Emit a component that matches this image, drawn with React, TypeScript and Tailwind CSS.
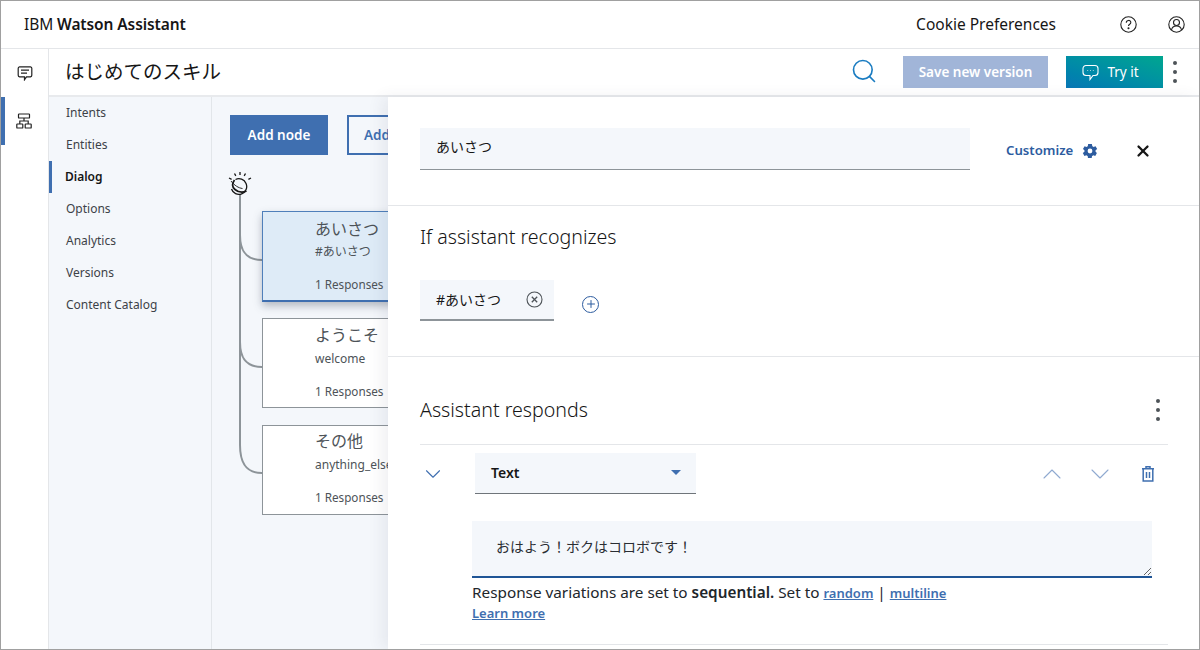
import React from "react";
import { ChevronDown, ChevronUp, Plus, X, Search } from "lucide-react";

const FONT = "[font-family:'Noto_Sans','Noto_Sans_CJK_JP',sans-serif]";

function Kebab() {
  return (
    <div className="flex flex-col items-center gap-[5px]">
      <span className="w-[4px] h-[4px] rounded-full bg-[#4d5358]" />
      <span className="w-[4px] h-[4px] rounded-full bg-[#4d5358]" />
      <span className="w-[4px] h-[4px] rounded-full bg-[#4d5358]" />
    </div>
  );
}

function WatsonLogo() {
  return (
    <svg width="26" height="24" viewBox="0 0 26 24" fill="none" stroke="#161616" strokeWidth="1.2">
      <path d="M8.500 8.500a7.800 7.800 0 1 1-4 9.500" strokeWidth="1.300" />
      <path d="M7.500 9c-2.500 3.500-2.500 7 .5 9.500 3 2.500 7.500 3.500 11.500 1.500" strokeWidth="1.700" />
      <path d="M4 10c3.500 4.500 7.500 7 11.500 7.500" strokeWidth="0.900" />
      <path d="M13 1v3M7.500 2.500l1.300 2.400M18.500 2.500l-1.300 2.400M2 7l2.600 1.300M24 7l-2.600 1.300" strokeWidth="1.300" />
    </svg>
  );
}

function TreeNode({ title, sub, box, subGap }: { title: string; sub: string; box: string; subGap: string }) {
  return (
    <div className={`w-[160px] pl-[52px] flex flex-col whitespace-nowrap text-[#4d5358] border ${box}`}>
      <div className="text-[16px] leading-[24px]">{title}</div>
      <div className={`text-[12px] leading-[18px] ${subGap}`}>{sub}</div>
      <div className="text-[11.700px] leading-[18px] mt-[14px]">1 Responses</div>
    </div>
  );
}

export default function App() {
  return (
    <div className={`${FONT} w-[1200px] h-[650px] border border-[#a0a0a0] flex flex-col overflow-hidden bg-white text-[#161616]`}>
      <header className="h-[48px] shrink-0 flex items-center pl-[23px] border-b border-[#e4e6e9]">
        <div className="text-[15.500px] tracking-[-0.1px]">
          IBM <span className="font-semibold">Watson Assistant</span>
        </div>
        <div className="ml-auto text-[15.500px] mr-[64px]">Cookie Preferences</div>
        <svg className="mr-[31px]" width="17" height="17" viewBox="0 0 17 17" fill="none" stroke="#222" strokeWidth="1.1">
          <circle cx="8.500" cy="8.500" r="7.700" />
          <path d="M6.300 6.700c0-3 4.500-3 4.500-.2 0 1.800-2.300 1.800-2.300 3.600" />
          <circle cx="8.500" cy="12.300" r=".5" fill="#222" />
        </svg>
        <svg className="mr-[14px]" width="17" height="17" viewBox="0 0 17 17" fill="none" stroke="#222" strokeWidth="1.1">
          <circle cx="8.500" cy="8.500" r="7.700" />
          <circle cx="8.500" cy="6.500" r="3" />
          <path d="M3.500 14c.5-3 2.500-4 5-4s4.500 1 5 4" />
        </svg>
      </header>

      <div className="flex-1 flex min-h-0">
        <nav className="w-[48px] shrink-0 border-r border-[#e4e6e9] flex flex-col">
          <div className="h-[48px] flex items-center justify-center">
            <svg width="16" height="16" viewBox="0 0 16 16" fill="none" stroke="#222" strokeWidth="1.2">
              <path d="M2.500 1.800h11a1.500 1.500 0 0 1 1.300 1.500v7a1.500 1.500 0 0 1-1.300 1.500H9.500L7.500 14.700v-2.900h-5a1.500 1.500 0 0 1-1.300-1.500v-7a1.500 1.500 0 0 1 1.300-1.500z" />
              <path d="M4 5.200h8M4 8.200h6" />
            </svg>
          </div>
          <div className="h-[48px] flex items-center justify-center border-l-[4px] border-[#3f6fb0] pr-[6px]">
            <svg width="16" height="16" viewBox="0 0 16 16" fill="none" stroke="#222" strokeWidth="1.2">
              <rect x="2.500" y="1" width="11" height="4" rx=".6" />
              <rect x=".8" y="11" width="6" height="4" rx=".6" />
              <rect x="9.200" y="11" width="6" height="4" rx=".6" />
              <path d="M3.800 11V8h8.400v3M8 5v3" />
            </svg>
          </div>
        </nav>

        <div className="flex-1 flex flex-col min-w-0">
          <div className="h-[48px] shrink-0 flex items-center border-b-2 border-[#e8eaed] pl-[16px]">
            <h1 className="text-[19.500px] font-normal">はじめてのスキル</h1>
            <Search className="ml-auto mr-[25px] mb-[2px] text-[#1a7cc1]" size={28} strokeWidth={1.4} />
            <button className="w-[145px] h-[32px] bg-[#a1b5d8] text-white text-[13.500px] font-semibold mr-[18px]">Save new version</button>
            <button className="w-[97px] h-[32px] bg-gradient-to-tr from-[#0a76b5] to-[#00a68f] text-white text-[13.500px] flex items-center justify-center gap-[8px] pr-[8px]">
              <svg width="17" height="17" viewBox="0 0 17 17" fill="none" stroke="#fff" strokeWidth="1.1">
                <path d="M4 1.500h9a3 3 0 0 1 3 3v4a3 3 0 0 1-3 3h-2l-3 4v-4H4a3 3 0 0 1-3-3v-4a3 3 0 0 1 3-3z" />
                <path d="M5.500 6.500h.6M8.200 6.500h.6M10.900 6.500h.6" />
              </svg>
              Try it
            </button>
            <div className="ml-[10px] mr-[22px]"><Kebab /></div>
          </div>

          <div className="flex-1 flex min-h-0">
            <aside className="w-[163px] shrink-0 bg-[#f4f7fb] border-r border-[#e2e6ea] text-[12px] text-[#3d4248]">
              {["Intents", "Entities", "Dialog", "Options", "Analytics", "Versions", "Content Catalog"].map((t) => (
                <div
                  key={t}
                  className={`h-[32px] flex items-center ${
                    t === "Dialog" ? "border-l-[3px] border-[#3f6fb0] pl-[13px] font-semibold text-[#161616]" : "pl-[17px]"
                  }`}
                >
                  {t}
                </div>
              ))}
            </aside>

            <main className="flex-1 min-w-0 bg-[#f4f7fb] overflow-hidden pl-[18px] pt-[18px] relative">
              <div className="flex gap-[19px] whitespace-nowrap">
                <button className="w-[98px] h-[40px] shrink-0 bg-[#3f6fb0] text-white text-[13.500px] font-semibold">Add node</button>
                <button className="w-[98px] h-[40px] shrink-0 border-2 border-[#3f6fb0] text-[#3f6fb0] text-[13.500px] font-semibold text-left pl-[15px]">Add child node</button>
              </div>
              <div className="ml-[-3px] mt-[16px] h-[24px]"><WatsonLogo /></div>
              <svg className="absolute left-[18px] top-[98px]" width="40" height="290" viewBox="0 0 40 290" fill="none" stroke="#8d9499" strokeWidth="2">
                <path d="M10 0V250c0 18 6 28 22 28" />
                <path d="M10 40c0 16 6 25 22 25" />
                <path d="M10 147c0 16 6 25 22 25" />
              </svg>
              <div className="relative pl-[32px] pt-[16px] flex flex-col">
                <TreeNode
                  title="あいさつ"
                  sub="#あいさつ"
                  subGap="mt-[2px]"
                  box="h-[91px] pt-[5px] bg-[#deebf7] border-[#4f7fba] border-b-2 border-b-[#3f6fb0] shadow-[0_4px_8px_rgba(60,70,90,0.35)]"
                />
                <div className="h-[16px]" />
                <TreeNode title="ようこそ" sub="welcome" subGap="mt-[3px]" box="h-[90px] pt-[4px] bg-white border-[#8d9499] border-r-0" />
                <div className="h-[17px]" />
                <TreeNode title="その他" sub="anything_else" subGap="mt-[3px]" box="h-[90px] pt-[3px] bg-white border-[#8d9499] border-r-0" />
              </div>
            </main>

            <section className="w-[811px] shrink-0 bg-white flex flex-col shadow-[-6px_0_14px_rgba(60,70,90,0.08)] relative">
              <div className="h-[109px] shrink-0 border-b border-[#e4e6e9] flex items-center pl-[32px] pb-[4px]">
                <div className="w-[550px] h-[42px] bg-[#f4f7fb] border-b border-[#8d9499] flex items-center pl-[16px] pb-[5px] text-[14px]">あいさつ</div>
                <div className="ml-[36px] mt-[4px] text-[13.200px] font-semibold text-[#2d5c9f]">Customize</div>
                <svg className="ml-[8px] mt-[4px]" width="18" height="18" viewBox="0 0 24 24" fill="#2d5c9f">
                  <path fillRule="evenodd" d="M19.400 13a7.500 7.500 0 0 0 0-2l2.200-1.700-2.200-3.800-2.600 1a7.500 7.500 0 0 0-1.700-1L14.500 2.800h-5l-.4 2.700a7.500 7.500 0 0 0-1.700 1l-2.600-1-2.200 3.800L4.600 11a7.500 7.500 0 0 0 0 2l-2.200 1.700 2.200 3.800 2.600-1a7.500 7.500 0 0 0 1.700 1l.4 2.700h5l.4-2.700a7.500 7.500 0 0 0 1.700-1l2.600 1 2.200-3.800zM12 15.200a3.200 3.200 0 1 1 0-6.400 3.200 3.200 0 0 1 0 6.400z" />
                </svg>
                <X className="ml-[35px] mt-[4px]" size={18} strokeWidth={3} />
              </div>

              <div className="h-[151px] shrink-0 border-b border-[#e4e6e9] pl-[32px] pt-[18px]">
                <h2 className="text-[19.600px] leading-[26px] font-light">If assistant recognizes</h2>
                <div className="flex items-center mt-[30px]">
                  <div className="w-[134px] h-[41px] bg-[#f4f7fb] border-b-2 border-[#8d9499] flex items-center pl-[16px] text-[14px] whitespace-nowrap">
                    #あいさつ
                    <svg className="ml-auto mr-[11px]" width="17" height="17" viewBox="0 0 17 17" fill="none" stroke="#4d5358" strokeWidth="1.100">
                      <circle cx="8.500" cy="8.500" r="7.500" />
                      <path d="M5.800 5.800l5.400 5.400M11.200 5.800l-5.400 5.400" strokeWidth="1.300" />
                    </svg>
                  </div>
                  <div className="ml-[28px] mt-[7px] w-[17px] h-[17px] rounded-full border-[1.500px] border-[#2d5c9f] flex items-center justify-center text-[#2d5c9f]">
                    <Plus size={12} strokeWidth={2} />
                  </div>
                </div>
              </div>

              <div className="flex-1 pl-[32px] pr-[31px] flex flex-col min-h-0">
                <div className="h-[88px] shrink-0 border-b border-[#e4e6e9] flex items-center justify-between pt-[18px] pr-[8px]">
                  <h2 className="text-[19.600px] font-light">Assistant responds</h2>
                  <Kebab />
                </div>
                <div className="flex items-center mt-[8px] h-[41px]">
                  <ChevronDown className="text-[#3f6fb0]" size={26} strokeWidth={1} />
                  <div className="ml-[29px] w-[221px] h-[41px] bg-[#f4f7fb] border-b border-[#6f757a] flex items-center pl-[16px] pr-[15px] pb-[2px] text-[14px] font-semibold">
                    Text
                    <span className="ml-auto w-0 h-0 border-x-[5px] border-x-transparent border-t-[5px] border-t-[#3f6fb0]" />
                  </div>
                  <ChevronUp className="ml-auto text-[#8fa9d0]" size={32} strokeWidth={0.8} />
                  <ChevronDown className="ml-[16px] text-[#8fa9d0]" size={32} strokeWidth={0.8} />
                  <svg className="ml-[26px] mr-[14px]" width="12" height="16" viewBox="0 0 12 16" fill="none" stroke="#3f6fb0" strokeWidth="1.500">
                    <path d="M0 2.700h12M4 2.700V.8h4v1.900" />
                    <path d="M1.200 3v12h9.600V3M4.500 6v6M7.500 6v6" />
                  </svg>
                </div>
                <textarea
                  readOnly
                  defaultValue="おはよう！ボクはコロボです！"
                  className="ml-[52px] mt-[27px] w-[680px] h-[57px] shrink-0 bg-[#f4f7fb] border-b-2 border-[#1f5596] pl-[24px] pt-[15px] text-[14px] leading-[22px] text-[#2a2e33] outline-none"
                />
                <div className="ml-[52px] mt-[4px] text-[15.300px] leading-[20px] whitespace-nowrap text-[#21262b]">
                  Response variations are set to <b className="font-semibold">sequential.</b> Set to{" "}
                  <span className="text-[13px] font-semibold text-[#3f6fb0] underline">random</span> |{" "}
                  <span className="text-[13px] font-semibold text-[#3f6fb0] underline">multiline</span>
                </div>
                <div className="ml-[52px] text-[13px] leading-[20px] font-semibold text-[#3f6fb0] underline">Learn more</div>
                <div className="mt-[21px] border-b border-[#e4e6e9]" />
              </div>
            </section>
          </div>
        </div>
      </div>
    </div>
  );
}
